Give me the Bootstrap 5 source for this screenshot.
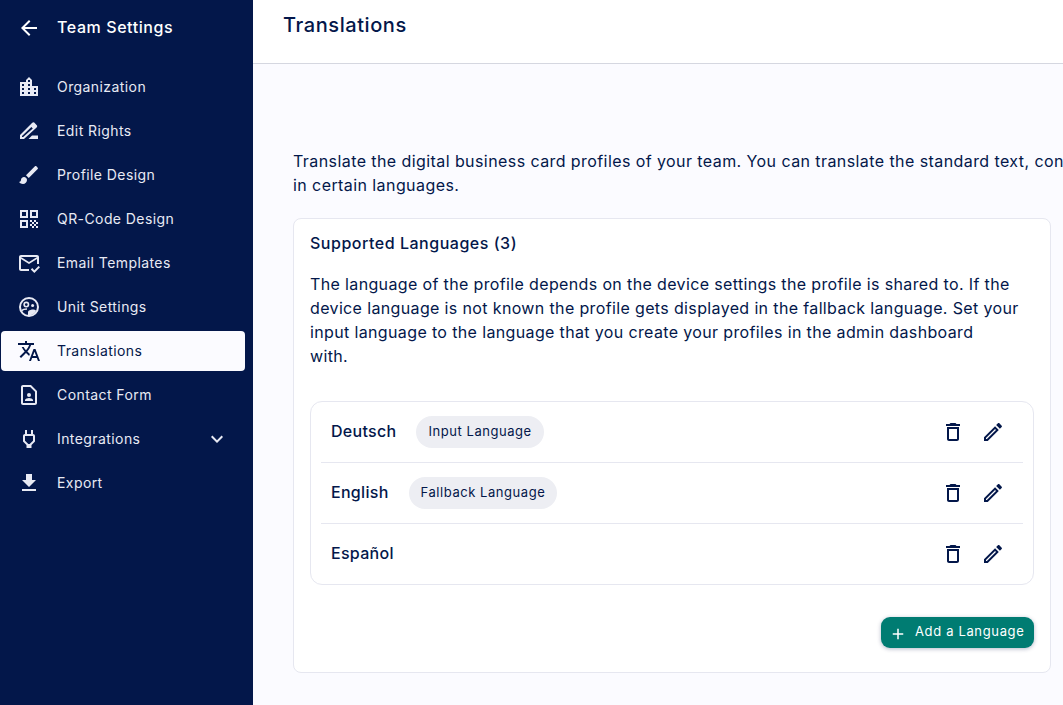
<!DOCTYPE html>
<html lang="en">

<head>
  <meta charset="UTF-8">
  <meta name="viewport" content="width=device-width, initial-scale=1.0">
  <title>Translations</title>
  <link rel="stylesheet" href="https://cdn.jsdelivr.net/npm/bootstrap@5.3.2/dist/css/bootstrap.min.css">
  <style>
    html, body { height: 100%; overflow: hidden; }
    body { font-family: "Inter", "Liberation Sans", sans-serif; color: #03174a; background: #fbfbff; }
    svg { fill: currentColor; flex: none; }
    .app-shell { width: 1063px; height: 705px; overflow: hidden; }
    .side-bar { width: 253px; flex: none; background: #03174a; color: #fff; }
    .side-title { height: 55px; padding-left: 17px; padding-bottom: 2px; gap: 16px; font-size: 16px; font-weight: 500; letter-spacing: .58px; }
    .side-title svg { margin-top: 2px; }
    .side-menu { margin-top: 12px; padding-left: 1px; padding-right: 8px; }
    .side-item { height: 40px; margin-bottom: 4px; padding: 0 16px 2px; gap: 16px; font-size: 14px; letter-spacing: .42px; color: #e8eaf4; border-radius: 4px; }
    .side-item svg { margin-top: 2px; }
    .side-item.is-active { background: #fbfbff; color: #03174a; }
    .main-area { width: 810px; flex: none; }
    .top-head { height: 64px; background: #fff; border-bottom: 1px solid #d5d7e0; padding: 0 30px 13px; font-size: 20px; font-weight: 500; letter-spacing: .58px; }
    .intro-text { width: 900px; margin: 85px 0 21px 40px; font-size: 16px; line-height: 24px; letter-spacing: .42px; white-space: nowrap; }
    .lang-card { width: 758px; height: 455px; margin-left: 40px; background: #fff; border: 1px solid #e6e7f0; border-radius: 8px; padding: 12px 16px; }
    .card-head { font-size: 16px; font-weight: 500; line-height: 24px; letter-spacing: .52px; margin-bottom: 17px; }
    .card-text-x { font-size: 16px; line-height: 24px; letter-spacing: .36px; margin-bottom: 33px; }
    .lang-list { border: 1px solid #e6e7f0; border-radius: 12px; padding: 0 10px; }
    .lang-row { height: 61px; padding: 0 10px 1px; border-bottom: 1px solid #e6e7f0; }
    .lang-row:last-child { height: 60px; border-bottom: 0; }
    .lang-name { padding-bottom: 2px; font-size: 16px; font-weight: 500; letter-spacing: .3px; margin-right: 20px; }
    .lang-tag { height: 32px; padding: 0 12px; border-radius: 16px; background: #edeef3; font-size: 13px; letter-spacing: .55px; display: flex; align-items: center; }
    .row-icons { gap: 16px; margin-right: 8px; }
    .add-btn { height: 31px; width: 153px; margin-top: 32px; gap: 8.5px; padding: 0 0 2px 7.5px; background: #007c72; color: #fff; border: 0; border-radius: 9px; font-size: 13px; font-weight: 400; letter-spacing: .65px; box-shadow: 0 1px 4px rgba(3,23,74,.3); }
    .add-btn svg { margin-top: 5px; }
  </style>
</head>

<body>
  <div class="app-shell d-flex">
    <aside class="side-bar">
      <div class="side-title d-flex align-items-center">
        <svg width="24" height="24" viewBox="0 0 24 24"><path d="M20 11H7.83l5.59-5.59L12 4l-8 8 8 8 1.41-1.41L7.83 13H20v-2z"/></svg>
        Team Settings
      </div>
      <div class="side-menu">
        <div class="side-item d-flex align-items-center">
          <svg width="24" height="24" viewBox="0 0 24 24"><path d="M15 11V5l-3-3-3 3v2H3v14h18V11h-6zm-8 8H5v-2h2v2zm0-4H5v-2h2v2zm0-4H5V9h2v2zm6 8h-2v-2h2v2zm0-4h-2v-2h2v2zm0-4h-2V9h2v2zm0-4h-2V5h2v2zm6 12h-2v-2h2v2zm0-4h-2v-2h2v2z"/></svg>
          Organization
        </div>
        <div class="side-item d-flex align-items-center">
          <svg width="24" height="24" viewBox="0 0 24 24"><path fill-rule="evenodd" d="M3 20v-4L15 4l1.2-.7 1 .3 2.8 2.8.2 1-.6 1.1L7 20H3zm2-2h1.2L15.8 9.4 14.4 8 5 17v1z"/><path d="M21 20h-9.5l3.5-3.6h6V20z"/></svg>
          Edit Rights
        </div>
        <div class="side-item d-flex align-items-center">
          <svg width="24" height="24" viewBox="0 0 24 24"><path d="M7 14c-1.66 0-3 1.34-3 3 0 1.31-1.16 2-2 2 .92 1.22 2.49 2 4 2 2.21 0 4-1.79 4-4 0-1.66-1.34-3-3-3zm13.71-9.37l-1.34-1.34c-.39-.39-1.02-.39-1.41 0L9 12.25 11.75 15l8.96-8.96c.39-.39.39-1.02 0-1.41z"/></svg>
          Profile Design
        </div>
        <div class="side-item d-flex align-items-center">
          <svg width="24" height="24" viewBox="0 0 24 24"><path d="M3 11h8V3H3v8zm2-6h4v4H5V5zM3 21h8v-8H3v8zm2-6h4v4H5v-4zM13 3v8h8V3h-8zm6 6h-4V5h4v4zM19 19h2v2h-2zM13 13h2v2h-2zM15 15h2v2h-2zM13 17h2v2h-2zM15 19h2v2h-2zM17 17h2v2h-2zM17 13h2v2h-2zM19 15h2v2h-2z"/></svg>
          QR-Code Design
        </div>
        <div class="side-item d-flex align-items-center">
          <svg width="24" height="24" viewBox="0 0 24 24"><path d="M12 18H4V8l8 5 8-5v5h2V6c0-1.1-.9-2-2-2H4c-1.1 0-2 .9-2 2v12c0 1.1.9 2 2 2h8v-2zm8-12l-8 5-8-5h16z"/><path d="M17.34 22l-3.54-3.54 1.41-1.41 2.12 2.12 4.24-4.24L23 16.34 17.34 22z"/></svg>
          Email Templates
        </div>
        <div class="side-item d-flex align-items-center">
          <svg width="24" height="24" viewBox="0 0 24 24"><path fill-rule="evenodd" d="M12 2a10 10 0 1 0 0 20 10 10 0 0 0 0-20zm0 18a8 8 0 1 1 0-16 8 8 0 0 1 0 16z"/><circle cx="9.3" cy="9.6" r="2.2" fill="none" stroke="currentColor" stroke-width="1.6"/><circle cx="15.6" cy="10.6" r="1.5"/><path d="M11 20.5v-3.3c0-1.5 3-2.6 4.6-2.6 1.4 0 2.8.4 3.6 1.1-1.4 3-4.2 4.8-8.2 4.8z"/><path d="M4.6 15.6c1-1 3-1.6 5.4-1.6" fill="none" stroke="currentColor" stroke-width="1.5"/></svg>
          Unit Settings
        </div>
        <div class="side-item is-active d-flex align-items-center">
          <svg width="24" height="24" viewBox="0 0 24 24"><path d="M12.87 15.07l-2.54-2.51.03-.03c1.74-1.94 2.98-4.17 3.71-6.53H17V4h-7V2H8v2H1v1.99h11.17C11.5 7.92 10.44 9.75 9 11.35 8.07 10.32 7.3 9.19 6.69 8h-2c.73 1.63 1.73 3.17 2.98 4.56l-5.09 5.02L4 19l5-5 3.11 3.11.76-2.04zM18.5 10h-2L12 22h2l1.12-3h4.75L21 22h2l-4.5-12zm-2.62 7l1.62-4.33L19.12 17h-3.24z"/></svg>
          Translations
        </div>
        <div class="side-item d-flex align-items-center">
          <svg width="24" height="24" viewBox="0 0 24 24"><path d="M14 2H6c-1.1 0-2 .9-2 2v16c0 1.1.89 2 1.99 2H18c1.1 0 2-.9 2-2V8l-6-6zM6 20V4h7.17L18 8.83V20H6z"/><circle cx="12" cy="12" r="2"/><path d="M8 18v-1c0-1.3 2.7-2 4-2s4 .7 4 2v1H8z"/></svg>
          Contact Form
        </div>
        <div class="side-item d-flex align-items-center">
          <svg width="24" height="24" viewBox="0 0 24 24"><path d="M16 7V3h-2v4h-4V3H8v4h-.01C6.9 7 6 7.9 6 8.99v5.49L9.5 18v3h5v-3l3.5-3.51v-5.5C18 7.9 17.1 7 16 7zm0 6.66L12.67 17h-1.34L8 13.66V9h8v4.66z"/></svg>
          Integrations
          <svg class="ms-auto" width="24" height="24" viewBox="0 0 24 24"><path d="M16.59 8.59L12 13.17 7.41 8.59 6 10l6 6 6-6z"/></svg>
        </div>
        <div class="side-item d-flex align-items-center">
          <svg width="24" height="24" viewBox="0 0 24 24"><path d="M19 9h-4V3H9v6H5l7 7 7-7zM5 18v2h14v-2H5z"/></svg>
          Export
        </div>
      </div>
    </aside>

    <main class="main-area">
      <div class="top-head d-flex align-items-center">Translations</div>
      <div class="intro-text">Translate the digital business card profiles of your team. You can translate the standard text, content and labels<br>in certain languages.</div>
      <div class="lang-card">
        <div class="card-head">Supported Languages (3)</div>
        <div class="card-text-x">The language of the profile depends on the device settings the profile is shared to. If the device language is not known the profile gets displayed in the fallback language. Set your input language to the language that you create your profiles in the admin dashboard<br>with.</div>
        <div class="lang-list">
          <div class="lang-row d-flex align-items-center">
            <span class="lang-name">Deutsch</span>
            <span class="lang-tag">Input Language</span>
            <div class="row-icons d-flex ms-auto">
              <svg width="24" height="24" viewBox="0 0 24 24"><path d="M6 19c0 1.1.9 2 2 2h8c1.1 0 2-.9 2-2V7H6v12zM8 9h8v10H8V9zm7.5-5l-1-1h-5l-1 1H5v2h14V4z"/></svg>
              <svg width="24" height="24" viewBox="0 0 24 24"><path d="M3 17.25V21h3.75L17.81 9.94l-3.75-3.75L3 17.25zM5.92 19H5v-.92l9.06-9.06.92.92L5.92 19zM20.71 7.04c.39-.39.39-1.02 0-1.41l-2.34-2.34c-.2-.2-.45-.29-.71-.29s-.51.08-.7.28l-1.83 1.83 3.75 3.75 1.83-1.82z"/></svg>
            </div>
          </div>
          <div class="lang-row d-flex align-items-center">
            <span class="lang-name">English</span>
            <span class="lang-tag">Fallback Language</span>
            <div class="row-icons d-flex ms-auto">
              <svg width="24" height="24" viewBox="0 0 24 24"><path d="M6 19c0 1.1.9 2 2 2h8c1.1 0 2-.9 2-2V7H6v12zM8 9h8v10H8V9zm7.5-5l-1-1h-5l-1 1H5v2h14V4z"/></svg>
              <svg width="24" height="24" viewBox="0 0 24 24"><path d="M3 17.25V21h3.75L17.81 9.94l-3.75-3.75L3 17.25zM5.92 19H5v-.92l9.06-9.06.92.92L5.92 19zM20.71 7.04c.39-.39.39-1.02 0-1.41l-2.34-2.34c-.2-.2-.45-.29-.71-.29s-.51.08-.7.28l-1.83 1.83 3.75 3.75 1.83-1.82z"/></svg>
            </div>
          </div>
          <div class="lang-row d-flex align-items-center">
            <span class="lang-name">Español</span>
            <div class="row-icons d-flex ms-auto">
              <svg width="24" height="24" viewBox="0 0 24 24"><path d="M6 19c0 1.1.9 2 2 2h8c1.1 0 2-.9 2-2V7H6v12zM8 9h8v10H8V9zm7.5-5l-1-1h-5l-1 1H5v2h14V4z"/></svg>
              <svg width="24" height="24" viewBox="0 0 24 24"><path d="M3 17.25V21h3.75L17.81 9.94l-3.75-3.75L3 17.25zM5.92 19H5v-.92l9.06-9.06.92.92L5.92 19zM20.71 7.04c.39-.39.39-1.02 0-1.41l-2.34-2.34c-.2-.2-.45-.29-.71-.29s-.51.08-.7.28l-1.83 1.83 3.75 3.75 1.83-1.82z"/></svg>
            </div>
          </div>
        </div>
        <div class="d-flex justify-content-end">
          <button class="add-btn btn d-flex align-items-center">
            <svg width="18" height="18" viewBox="0 0 24 24"><path d="M19 13h-6v6h-2v-6H5v-2h6V5h2v6h6v2z"/></svg>
            Add a Language
          </button>
        </div>
      </div>
    </main>
  </div>
  <script src="https://cdn.jsdelivr.net/npm/bootstrap@5.3.2/dist/js/bootstrap.bundle.min.js"></script>
</body>

</html>
